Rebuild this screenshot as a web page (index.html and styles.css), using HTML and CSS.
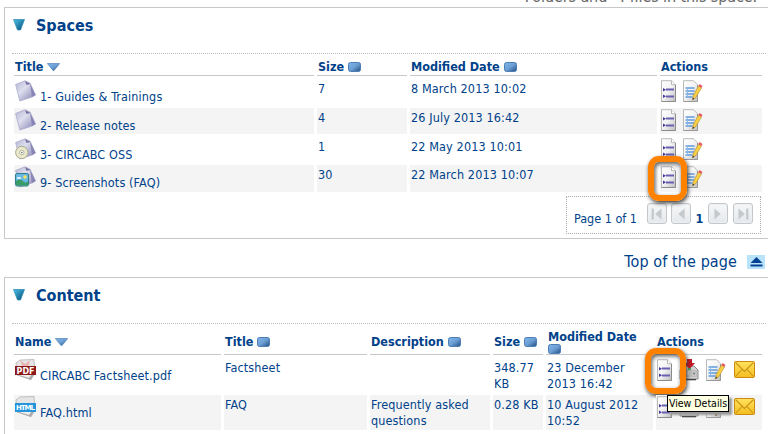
FILE: index.html
```
<!DOCTYPE html>
<html lang="en">
<head>
<meta charset="utf-8">
<title>CIRCABC Library</title>
<link rel="stylesheet" href="styles.css">
</head>
<body>
<svg class="defs" aria-hidden="true">
  <defs>
    <linearGradient id="blue" x2="1" y2="1"><stop stop-color="#7fb6ec"/><stop offset=".5" stop-color="#6c9fd4"/><stop offset="1" stop-color="#234c80"/></linearGradient>
    <linearGradient id="tri" x2="1" y2="1"><stop stop-color="#48c5ee"/><stop offset="1" stop-color="#06476f"/></linearGradient>
    <linearGradient id="purple" x2="1" y2="1"><stop stop-color="#b5b5d4"/><stop offset=".4" stop-color="#dedeef"/><stop offset="1" stop-color="#7f7bae"/></linearGradient>
    <linearGradient id="paper" x2="1" y2="1"><stop stop-color="#fff"/><stop offset=".5" stop-color="#f3f3f3"/><stop offset="1" stop-color="#bdbdbd"/></linearGradient>
    <linearGradient id="gold" x2="0" y2="1"><stop stop-color="#ffe35c"/><stop offset="1" stop-color="#f5bd20"/></linearGradient>
    <symbol id="sort" viewBox="0 0 13 10"><rect x=".5" y=".5" width="12" height="9" rx="2" fill="url(#blue)" stroke="#4c7eb4"/></symbol>
    <symbol id="down" viewBox="0 0 13 8"><path d="M.3.5h12.4L7 7.5H6z" fill="url(#blue)" stroke="#4676ad" stroke-width=".6"/></symbol>
    <symbol id="toggle" viewBox="0 0 12 12"><path d="M.5.5h11L7.500 11h-3z" fill="url(#tri)" stroke="#2586b2" stroke-width=".7"/></symbol>
    <symbol id="space" viewBox="0 0 21 22"><path d="M.6 4.500 10 .8l5 2.200 5.500 12-3.500 2L4.800 21z" fill="url(#purple)" stroke="#a5a3c8" stroke-width=".7"/><path d="m10 1 1.500 4L15.500 4z" fill="#77739f"/><path d="m15 3.500 5.500 11.500-3.500 2z" fill="#8985b5"/></symbol>
    <symbol id="list" viewBox="0 0 15 22"><path d="M.5.7h10l4 4v16.800H.5z" fill="url(#paper)" stroke="#b9b9b9"/><path d="M10.500.7v4h4" fill="#fff" stroke="#aaa" stroke-width=".8"/><path d="M14.500 5v16.500H.5" fill="none" stroke="#8b8b8b"/><path d="M2 8l3 1.800-3 1.800zM2 14.500l3 1.800-3 1.800z" fill="#443a9c"/><path d="M5 9.500h8M5 16.500h8" stroke="#6a60b2" stroke-width="2"/></symbol>
    <symbol id="edit" viewBox="0 0 20 22"><path d="M.5.7h10l4 4v16.800H.5z" fill="url(#paper)" stroke="#b9b9b9"/><path d="M14.500 5v16.500H.5" fill="none" stroke="#999"/><path d="M2.500 8h9M2.500 11h9M2.500 14h9M2.500 17h7" stroke="#609bdc" stroke-width="1.300"/><path d="M4.500 7v10" stroke="#8bb8e8"/><path d="m9.500 20 .8-4.500L15.500 6l3 2-5.700 9.500z" fill="#f9cf46" stroke="#b58a2d" stroke-width=".6"/><path d="m15.300 6 1.300-2 2.900 2-1.200 2z" fill="#e5595c"/><path d="m9.500 20 .4-2.500 1.500 1.200z" fill="#333"/></symbol>
    <symbol id="download" viewBox="0 0 20 22"><path d="m1 11 4-4h10l4 4v9H1z" fill="#d2d2d2" stroke="#888"/><path d="M2 11h16v7H2z" fill="#bcbcbc"/><path d="M4 12v4M6.500 12v4M9 12v4" stroke="#eee"/><circle cx="15" cy="14.500" r="1.800" fill="#8d8d8d" stroke="#eee" stroke-width=".6"/><path d="M3 20h14v1.300H3z" fill="#444"/><path d="M8 0h5v4h3l-5.500 6L5 4h3z" fill="#c41625"/><path d="M9 9h3v2H9z" fill="#45a65a"/></symbol>
    <symbol id="mail" viewBox="0 0 21 17"><rect x=".5" y=".5" width="20" height="16" rx="1" fill="url(#gold)" stroke="#c98b13"/><path d="m1.500 1.500 9 9 9-9M1.500 15.500l6.500-7M19.500 15.500l-6.500-7" fill="none" stroke="#c99116" stroke-width="1.100"/></symbol>
    <symbol id="file" viewBox="0 0 21 22"><path d="m1 4 4-3 14-.5 1 14-4 6L2 16z" fill="#e5e5e5" stroke="#aaa" stroke-width=".7"/><path d="m2 16 14 5 3-6z" fill="#aaa"/><path d="m4 16 10 3 3-4z" fill="#eee"/></symbol>
  </defs>
</svg>
<div class="page">
  <p class="summary">Folders and &nbsp;4 files in this space.</p>
  <section class="panel spaces">
    <h2><svg><use href="#toggle"/></svg>Spaces</h2>
    <div class="table">
      <div class="row head"><div>Title <svg class="down"><use href="#down"/></svg></div><div>Size <svg class="sort"><use href="#sort"/></svg></div><div>Modified Date <svg class="sort"><use href="#sort"/></svg></div><div>Actions</div></div>
      <div class="row"><div class="name"><svg><use href="#space"/></svg><span>1- Guides &amp; Trainings</span></div><div>7</div><div>8 March 2013 10:02</div><div class="actions"><svg class="list"><use href="#list"/></svg><svg class="edit"><use href="#edit"/></svg></div></div>
      <div class="row alt"><div class="name"><svg><use href="#space"/></svg><span>2- Release notes</span></div><div>4</div><div>26 July 2013 16:42</div><div class="actions"><svg class="list"><use href="#list"/></svg><svg class="edit"><use href="#edit"/></svg></div></div>
      <div class="row third"><div class="name"><svg viewBox="0 0 21 22"><use href="#space" width="21" height="22"/><circle cx="6.800" cy="14.500" r="6.200" fill="#e9e8cd" stroke="#aaa98f"/><circle cx="6.800" cy="14.500" r="2.200" fill="#fff" stroke="#b7b69c"/><circle cx="6.800" cy="14.500" r=".8" fill="#666"/></svg><span>3- CIRCABC OSS</span></div><div>1</div><div>22 May 2013 10:01</div><div class="actions"><svg class="list"><use href="#list"/></svg><svg class="edit"><use href="#edit"/></svg></div></div>
      <div class="row alt last"><div class="name"><svg viewBox="0 0 21 22"><use href="#space" width="21" height="22"/><rect x=".5" y="7.500" width="13" height="12.500" rx="1.500" fill="#65b9e3" stroke="#36808e"/><path d="M1 15q4-3 7 0t5 0v4.500H1z" fill="#3b9b68"/><path d="M2 12h4" stroke="#fff" stroke-width="1.500"/><circle cx="10" cy="11" r="1.800" fill="#ffe05a"/></svg><span>9- Screenshots (FAQ)</span></div><div>30</div><div>22 March 2013 10:07</div><div class="actions"><svg class="list"><use href="#list"/></svg><svg class="edit"><use href="#edit"/></svg><i class="ring ring-space"></i></div></div>
    </div>
    <div class="pager"><span class="count">Page 1 of 1</span>
      <button aria-label="First"><svg viewBox="0 0 20 20"><path d="M4 4h2.500v12H4zM15 4v12l-7-6z"/></svg></button>
      <button aria-label="Previous"><svg viewBox="0 0 20 20"><path d="M14 4v12l-7-6z"/></svg></button>
      <b>1</b>
      <button aria-label="Next"><svg viewBox="0 0 20 20"><path d="M6 4v12l7-6z"/></svg></button>
      <button aria-label="Last"><svg viewBox="0 0 20 20"><path d="M13.500 4H16v12h-2.500zM5 4v12l7-6z"/></svg></button>
    </div>
  </section>
  <div class="top-link"><span>Top of the page</span><svg viewBox="0 0 18 14"><path fill="#b9e2fb" d="M0 0h18v14H0z"/><path fill="#064293" d="m9.500 2 6 6h-12zM3.500 9.500h12v2h-12z"/></svg></div>
  <section class="panel content">
    <h2><svg><use href="#toggle"/></svg>Content</h2>
    <div class="table">
      <div class="row head"><div>Name <svg class="down"><use href="#down"/></svg></div><div>Title <svg class="sort"><use href="#sort"/></svg></div><div>Description <svg class="sort"><use href="#sort"/></svg></div><div>Size <svg class="sort"><use href="#sort"/></svg></div><div class="stacked"><span>Modified Date</span><svg class="sort"><use href="#sort"/></svg></div><div>Actions</div></div>
      <div class="row first"><div class="name"><svg viewBox="0 0 21 22"><use href="#file" width="21" height="22"/><path d="m5 1 5 4 5-4-2 8H8z" fill="#e9b3b3"/><path fill="#8e1717" d="M0 7h21v9H0z"/><text class="badge" x="1.500" y="14.500" textLength="18">PDF</text></svg><span>CIRCABC Factsheet.pdf</span></div><div>Factsheet</div><div></div><div>348.77<br>KB</div><div>23 December<br>2013 16:42</div><div class="actions"><svg class="list"><use href="#list"/></svg><svg class="download"><use href="#download"/></svg><svg class="edit"><use href="#edit"/></svg><svg class="mail"><use href="#mail"/></svg><i class="ring ring-file"></i></div></div>
      <div class="row alt"><div class="name"><svg viewBox="0 0 21 22"><use href="#file" width="21" height="22"/><path fill="#2495dc" d="M0 7h21v9H0z"/><text class="badge html" x="1" y="14.300" textLength="19">HTML</text></svg><span>FAQ.html</span></div><div>FAQ</div><div>Frequently asked<br>questions</div><div>0.28 KB</div><div>10 August 2012<br>10:52</div><div class="actions"><svg class="list"><use href="#list"/></svg><svg class="download"><use href="#download"/></svg><svg class="edit"><use href="#edit"/></svg><svg class="mail"><use href="#mail"/></svg><span class="tooltip">View Details</span></div></div>
    </div>
  </section>
</div>
</body>
</html>
```
FILE: styles.css
```
* { box-sizing: border-box; }
body { margin: 0; background: #fff; color: #00428a; font: 12.5px/16px "DejaVu Sans Condensed", "DejaVu Sans", sans-serif; font-stretch: condensed; letter-spacing: .13px; }
.defs { position: absolute; width: 0; height: 0; }
svg { display: block; flex: none; }
.page { width: 768px; height: 434px; overflow: hidden; }
.summary { margin: -13px 11px 0 0; height: 20px; font-size: 16px; line-height: 20px; letter-spacing: -.1px; color: #666; text-align: right; white-space: nowrap; }
.panel { width: 780px; margin-left: 4px; border: 1px solid #c6c9cc; }
.spaces { height: 232px; }
.content { height: 180px; }
h2 { display: flex; align-items: center; gap: 11px; width: 754px; height: 46px; margin: 0 0 0 7px; padding: 0 0 9px 1px; border-bottom: 1px dotted #bbb; font-size: 16px; line-height: 20px; letter-spacing: 0; }
h2 svg { width: 12px; height: 12px; margin-bottom: 2px; }
.table { display: flex; flex-direction: column; gap: 3px; width: 748px; margin-left: 9px; }
.row { display: grid; column-gap: 3px; height: 26px; white-space: nowrap; }
.row > div { padding: 2px 0 0 1px; min-width: 0; }
.spaces .row { grid-template-columns: 300px 90px 247px 102px; }
.content .row { grid-template-columns: 207px 143px 120px 50px 107px 106px; height: 35px; }
.content .first { height: 34px; }
.spaces .third { height: 25px; }
.spaces .last { height: 27px; }
.spaces .head { height: 22px; }
.content .head { height: 31px; }
.row.head > div { display: flex; align-items: center; gap: 4px; padding: 5px 0 0 1px; border-bottom: 1px solid #c5c9cb; font-weight: bold; letter-spacing: 0; }
.content .head > div { padding-top: 6px; }
.row.head > .stacked { flex-direction: column; align-items: flex-start; gap: 0; padding: 5px 0 0 2px; line-height: 15px; }
.down { width: 13px; height: 8px; }
.sort { width: 13px; height: 10px; }
.alt > div { background: #f4f4f4; }
.row > .name { display: flex; align-items: flex-start; gap: 4px; padding-top: 1px; }
.name svg { width: 21px; height: 22px; }
.name span { margin-top: 9px; }
.actions { position: relative; display: flex; align-items: flex-start; }
.row > .actions { padding-top: 1px; }
.list { width: 15px; height: 22px; }
.edit { width: 20px; height: 22px; margin-left: 7px; }
.download { width: 20px; height: 22px; margin-left: 7px; }
.mail { width: 21px; height: 17px; margin: 2px 0 0 8px; }
.ring { position: absolute; border: 6px solid #ff8100; border-radius: 11px; box-shadow: 1px 2px 4px #333, inset 1px 2px 4px #555; }
.ring-space { left: -12px; top: -9px; width: 39px; height: 45px; }
.ring-file { left: -11px; top: -10px; width: 41px; height: 46px; }
.tooltip { position: absolute; left: 11px; top: 0; width: 62px; height: 17px; border: 1px solid #000; background: #ffffe1; color: #000; font-size: 10.500px; line-height: 15px; letter-spacing: 0; text-align: center; box-shadow: 3px 3px 2px #999; }
.badge { fill: #fff; font: bold 8px "DejaVu Sans", sans-serif; letter-spacing: 0; }
.html { font-size: 7px; }
.pager { display: flex; align-items: flex-start; width: 195px; height: 38px; margin: 4px 0 0 561px; padding: 6px 0 0 7px; border: 1px dotted #aaa; white-space: nowrap; }
.count { width: 73px; margin-top: 8px; letter-spacing: 0; }
.pager button { width: 20px; height: 21px; margin: 0 4px 0 0; padding: 0; border: 1px solid #c3c7cb; border-radius: 3px; background: linear-gradient(#f6f7f8, #e5e8eb); box-shadow: inset 0 0 0 1px #edf0f3; }
.pager button:last-child { margin-left: 1px; }
.pager button svg { width: 18px; height: 18px; fill: #c4c9ce; }
.pager b { width: 9px; margin: 8px 4px 0 0; text-align: center; }
.top-link { display: flex; justify-content: flex-end; align-items: center; gap: 10px; height: 38px; padding: 8px 3px 0 0; font-size: 16px; line-height: 20px; letter-spacing: .1px; }
.top-link svg { width: 18px; height: 14px; }
```
